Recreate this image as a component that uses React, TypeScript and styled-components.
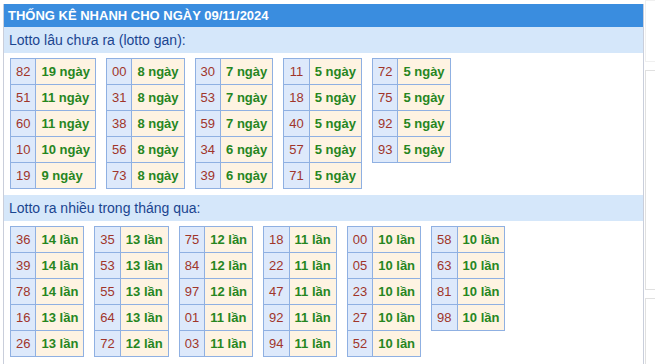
import styled, { createGlobalStyle } from "styled-components";

const GlobalStyle = createGlobalStyle`
  html, body {
    overflow: hidden;
  }
  body {
    margin: 0;
    background: #fff;
    font-family: "Liberation Sans", Arial, sans-serif;
  }
`;

type Row = [string, number];

const ganTables: Row[][] = [
  [["82", 19], ["51", 11], ["60", 11], ["10", 10], ["19", 9]],
  [["00", 8], ["31", 8], ["38", 8], ["56", 8], ["73", 8]],
  [["30", 7], ["53", 7], ["59", 7], ["34", 6], ["39", 6]],
  [["11", 5], ["18", 5], ["40", 5], ["57", 5], ["71", 5]],
  [["72", 5], ["75", 5], ["92", 5], ["93", 5]],
];

const hotTables: Row[][] = [
  [["36", 14], ["39", 14], ["78", 14], ["16", 13], ["26", 13]],
  [["35", 13], ["53", 13], ["55", 13], ["64", 13], ["72", 12]],
  [["75", 12], ["84", 12], ["97", 12], ["01", 11], ["03", 11]],
  [["18", 11], ["22", 11], ["47", 11], ["92", 11], ["94", 11]],
  [["00", 10], ["05", 10], ["23", 10], ["27", 10], ["52", 10]],
  [["58", 10], ["63", 10], ["81", 10], ["98", 10]],
];

const sections = [
  { title: "Lotto lâu chưa ra (lotto gan):", unit: "ngày", tables: ganTables },
  { title: "Lotto ra nhiều trong tháng qua:", unit: "lần", tables: hotTables },
];

const App = () => {
  return (
    <>
      <GlobalStyle />
      <Page>
        <Panel>
          <Header>THỐNG KÊ NHANH CHO NGÀY 09/11/2024</Header>
          {sections.map((s) => (
            <section key={s.title}>
              <SubHeader>{s.title}</SubHeader>
              <TableWrap>
                {s.tables.map((rows, i) => (
                  <Table key={`${s.unit}-${i}`}>
                    <tbody>
                      {rows.map(([num, count]) => (
                        <tr key={num}>
                          <NumCell>{num}</NumCell>
                          <ValCell>
                            {count} {s.unit}
                          </ValCell>
                        </tr>
                      ))}
                    </tbody>
                  </Table>
                ))}
              </TableWrap>
            </section>
          ))}
        </Panel>
        <Aside>
          <SideBox $height={60} $faint />
          <SideBox $height={218} />
          <SideBox $height={90} />
        </Aside>
      </Page>
    </>
  );
};

const Page = styled.div`
  display: flex;
  align-items: flex-start;
  width: 655px;
  height: 364px;
  padding: 4px 0 0 3px;
  box-sizing: border-box;
  gap: 1px;
`;

const Panel = styled.div`
  flex: 0 0 639px;
  align-self: stretch;
  border-left: 1px solid #c9cedb;
  border-right: 1px solid #c9cedb;
`;

const Header = styled.div`
  height: 23px;
  line-height: 23px;
  background: #3a8ddf;
  color: #fff;
  font-size: 13px;
  font-weight: bold;
  padding-left: 4px;
`;

const SubHeader = styled.div`
  height: 26px;
  line-height: 26px;
  background: #d5e7fa;
  color: #1b4590;
  font-size: 14px;
  padding-left: 5px;
`;

const TableWrap = styled.div`
  display: flex;
  flex-wrap: wrap;
  align-items: flex-start;
  gap: 10px;
  padding: 5px 6px 6px 6px;
`;

const Table = styled.table`
  border-collapse: collapse;
  font-size: 13px;
  line-height: 15px;
`;

const NumCell = styled.td`
  border: 1px solid #8fb0e2;
  background: #dde9fb;
  color: #a0352a;
  padding: 5px 5px;
  text-align: center;
`;

const ValCell = styled.td`
  border: 1px solid #8fb0e2;
  background: #fef3e2;
  color: #26861f;
  font-weight: bold;
  padding: 5px 5px;
  white-space: nowrap;
`;

const Aside = styled.div`
  display: flex;
  flex-direction: column;
  gap: 8px;
  margin-top: -4px;
  flex: 0 0 20px;
`;

const SideBox = styled.div<{ $height: number; $faint?: boolean }>`
  height: ${(p) => p.$height}px;
  border: 1px solid ${(p) => (p.$faint ? "#f0f0f0" : "#e0e0e0")};
  background: #fff;
`;

export default App;
